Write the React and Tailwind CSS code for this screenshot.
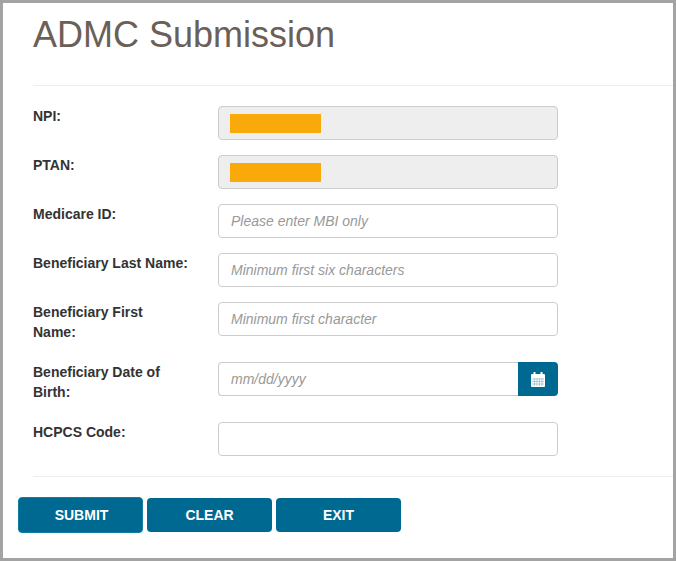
import React from 'react';

const inputClass =
  'h-[34px] w-[340px] rounded border border-[#ccc] bg-white px-3 text-sm text-[#555] italic placeholder:text-[#999] outline-none';

const Row = ({ label, children }) => (
  <div className="mb-[15px] flex">
    <label className="w-[185px] text-sm leading-[21px] font-bold text-[#333]">{label}</label>
    <div className="w-[340px]">{children}</div>
  </div>
);

const Masked = () => (
  <div className="flex h-[34px] w-[340px] items-center rounded border border-[#ccc] bg-[#eee] pl-[11px]">
    <div className="h-[19px] w-[91px] bg-[#f9a90a]" />
  </div>
);

const CalendarIcon = () => (
  <svg width="14" height="15" viewBox="0 0 14 15">
    <rect x="0" y="2" width="14" height="13" rx="1" fill="#fff" />
    <rect x="2.5" y="0" width="2" height="3" fill="#fff" />
    <rect x="9.5" y="0" width="2" height="3" fill="#fff" />
    <path d="M1 7h12M1 9.5h12M1 12h12M3.5 6v8M6 6v8M8.5 6v8M11 6v8" stroke="#8fbccd" strokeWidth="0.7" />
  </svg>
);

const App = () => {
  return (
    <div className="h-[561px] w-[676px] overflow-hidden border-[3px] border-[#a3a3a3] bg-white font-['Liberation_Sans',Arial,sans-serif]">
      <div className="ml-[30px] h-[83px] border-b border-[#eee] pt-3">
        <h1 className="text-4xl leading-[40px] font-normal text-[#6b5f57]">ADMC Submission</h1>
      </div>

      <form className="pt-5">
        <div className="ml-[30px]">
          <Row label="NPI:"><Masked /></Row>
          <Row label="PTAN:"><Masked /></Row>
          <Row label="Medicare ID:">
            <input className={inputClass} placeholder="Please enter MBI only" />
          </Row>
          <Row label="Beneficiary Last Name:">
            <input className={inputClass} placeholder="Minimum first six characters" />
          </Row>
          <Row label={<>Beneficiary First<span className="-mt-px block pb-1">Name:</span></>}>
            <input className={inputClass} placeholder="Minimum first character" />
          </Row>
          <Row label={<>Beneficiary Date of<span className="-mt-px block pb-1">Birth:</span></>}>
            <div className="flex">
              <input
                className="h-[34px] w-[300px] rounded-l border border-r-0 border-[#ccc] bg-white px-3 text-sm text-[#555] italic outline-none placeholder:text-[#999]"
                placeholder="mm/dd/yyyy"
              />
              <button
                type="button"
                className="flex h-[34px] w-10 items-center justify-center rounded-r bg-[#006991]"
              >
                <CalendarIcon />
              </button>
            </div>
          </Row>
          <Row label="HCPCS Code:">
            <input className={inputClass} />
          </Row>
        </div>

        <div className="ml-[30px] h-[6px] border-b border-[#eee]" />

        <div className="ml-[15px] mt-5 flex items-center gap-1">
          <button type="button" className="h-9 w-[125px] rounded border border-[#0f7ea0] bg-[#006991] pl-0.5 text-sm font-bold text-white">
            SUBMIT
          </button>
          <button type="button" className="h-[34px] w-[125px] rounded bg-[#006991] text-sm font-bold text-white">
            CLEAR
          </button>
          <button type="button" className="h-[34px] w-[125px] rounded bg-[#006991] text-sm font-bold text-white">
            EXIT
          </button>
        </div>
      </form>
    </div>
  );
};

export default App;
